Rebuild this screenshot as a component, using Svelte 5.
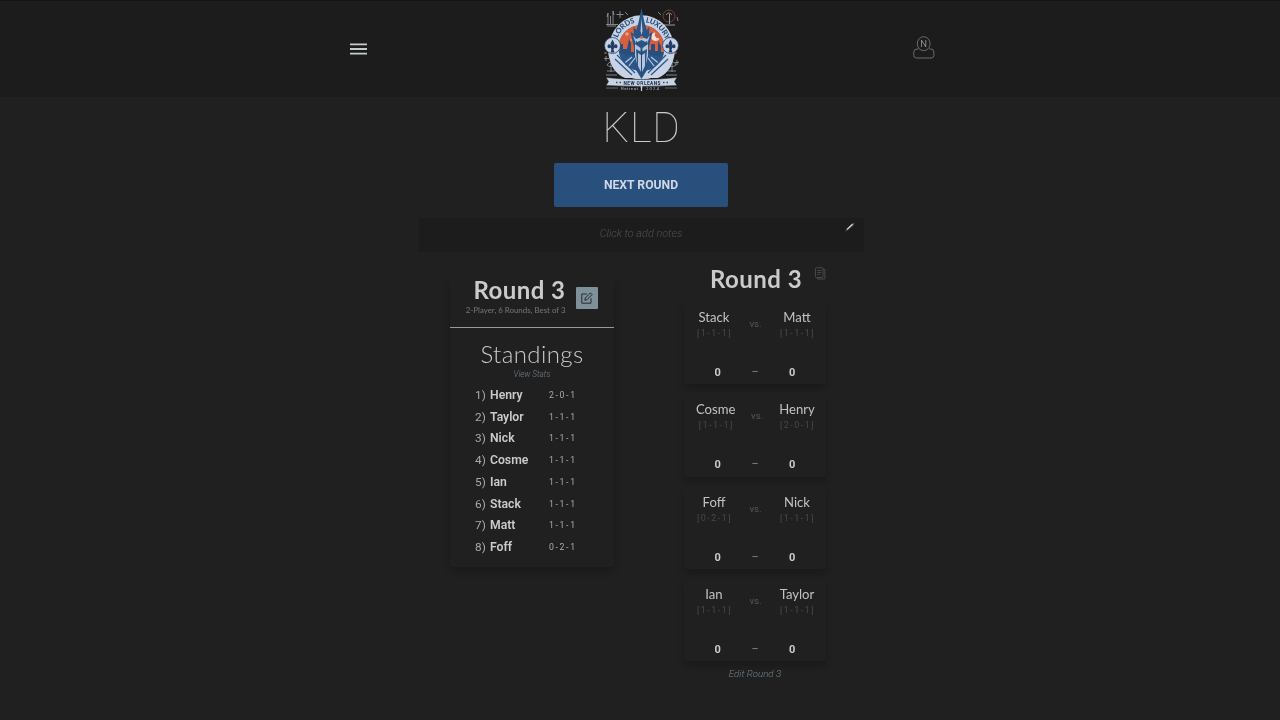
<script>
  const standings = [
    ['Henry', '2-0-1'], ['Taylor', '1-1-1'], ['Nick', '1-1-1'], ['Cosme', '1-1-1'],
    ['Ian', '1-1-1'], ['Stack', '1-1-1'], ['Matt', '1-1-1'], ['Foff', '0-2-1']
  ];
  const matches = [
    { a: 'Stack', ar: '[1-1-1]', b: 'Matt', br: '[1-1-1]' },
    { a: 'Cosme', ar: '[1-1-1]', b: 'Henry', br: '[2-0-1]' },
    { a: 'Foff', ar: '[0-2-1]', b: 'Nick', br: '[1-1-1]' },
    { a: 'Ian', ar: '[1-1-1]', b: 'Taylor', br: '[1-1-1]' }
  ];
</script>

<div class="page">
  <header>
    <svg class="menu" width="17" height="12" viewBox="0 0 17 12" fill="#c6ccca"><path d="M0 .4h17v1.9H0zM0 5h17v2H0zM0 9.7h17v1.9H0z" /></svg>
    <svg class="logo" width="78" height="86" viewBox="0 0 78 86">
      <defs>
        <path id="arcL" d="M14.600 30A25 25 0 0 1 36 14.100" />
        <path id="arcR" d="M42.500 14.300A25 25 0 0 1 63.500 38" />
        <clipPath id="disc"><circle cx="38.500" cy="40" r="23" /></clipPath>
      </defs>
      <g fill="none" stroke="#98a1aa" stroke-width=".8">
        <path d="M5 5v12M7.500 8v8M10 3v13M3 16.500h12M17 3v7M13.500 6.500h7M5 5l-1 4M10 3l1 4M4 18h9" />
        <path d="M3 48v5M1 50.500h5M4 63h8M8 54v10M4 57c2-4 7-4 8 0-2 2-6 2-8 0M3 67h11" />
        <path d="M74 52v5M72 54.500h4M65 63h8M69 54v10M65 57c2-4 7-4 8 0-2 2-6 2-8 0M63 67h11" />
        <circle cx="66" cy="8" r="6" stroke="#8d4638" />
        <path d="M63 7c2-3 5-2 6 0" stroke="#c3a49c" />
        <path d="M66.500 6v10M61 17h11" stroke="#b9bec4" />
        <path d="M74 9l1 4M22 4l3 3M55 4l3 3" />
      </g>
      <path d="M1.500 44h2v2h-2zM71.500 44h2v2h-2z" fill="#a9513d" />
      <circle cx="38.500" cy="39.500" r="32.200" fill="#c6d3e5" />
      <circle cx="38.500" cy="40" r="23" fill="#264f7e" />
      <g clip-path="url(#disc)">
        <path fill="#d85f3e" d="M13 15h51v27l-3-2v4h-3v-6l-3-5v10h-3v-7h-4v6h-3V25H31v19h-3v-9l-2-4-2 10h-4v-5h-3v7h-4z" />
        <path fill="#2b568a" d="M13 45h6l5 3 7-2 3-18h9l3 18 8 2 10-3v26H13z" />
        <path d="M18 58l11-9M22 63l10-13M59 58 48 49M55 63 45 50" stroke="#b8c8de" stroke-width="1.200" fill="none" />
        <path d="M56.500 30a4.200 4.200 0 1 1-4-5.500 3.600 3.600 0 0 0 4 5.500" fill="#f2ddda" />
        <path d="M24 24v4M22 26h4M28 31v2M56 21.500v3M54.500 23h3" stroke="#efc5bd" stroke-width=".8" />
      </g>
      <path fill="#c8d4e5" d="M5 44c6 3 11 9 18 14l11 12H22C12 66 7 57 5 44M72 44c-6 3-11 9-18 14L43 70h12c10-4 15-13 17-26" />
      <g fill="#c8d4e5" stroke="#1f3f69" stroke-width=".8">
        <circle cx="9.500" cy="37.500" r="8" /><circle cx="67.500" cy="37.500" r="8" />
      </g>
      <path d="m12 51 17 16M14 47l18 18M65 51 48 67M63 47 45 65" fill="none" stroke="#2c5484" stroke-width="1.200" />
      <g fill="#223d65">
        <path d="m9.500 31.500 2 4-1 3c1-3 4-3 4 0 0 2-2 2-3 1l-1 2 1 3h-4l1-3-1-2c-1 1-3 1-3-1 0-3 3-3 4 0l-1-3z" />
        <path d="m67.500 31.500 2 4-1 3c1-3 4-3 4 0 0 2-2 2-3 1l-1 2 1 3h-4l1-3-1-2c-1 1-3 1-3-1 0-3 3-3 4 0l-1-3z" />
      </g>
      <path fill="#2a5485" d="m38.500 0 2.700 13 2.300 9 3-3-.5 7 3.500-2-3.500 15-2 23-5.500 9-5.500-9-2-23-3.500-15 3.500 2-.5-7 3 3 2.300-9z" />
      <path fill="#b5c4d8" d="m38.500 10 1 13-1 4-1-4zM30 27l3 4 5.500-2 5.500 2 3-4-2.500 8-6-3-6 3zM32 36l5.500 4v3.500L33 41l1 15-2-8zM45 36l-5.500 4v3.500L44 41l-1 15 2-8zM35 45l3 2v17l-3-6zM42 45l-3 2v17l3-6z" />
      <path d="M37.300 28h2.600v2.600h-2.600z" fill="#d66347" />
      <path d="M38.500 42v26M33 33l2 4M44 33l-2 4" stroke="#214976" />
      <g font-family="Lato, sans-serif" font-weight="900" fill="#294b78" font-size="7.400">
        <text textLength="24"><textPath href="#arcL">LORDS</textPath></text>
        <text textLength="28"><textPath href="#arcR">LUXURY</textPath></text>
      </g>
      <path fill="#c8d3e2" stroke="#1c1c1c" stroke-width=".5" d="M3 69.500q35 4 71 0L71.500 73.500l2.500 4q-36 2-71 0l2.500-4z" />
      <path d="M13 74.500h1.500M16.500 74.500H18M60 74.500h1.500M63.500 74.500H65" stroke="#294b78" stroke-width="1.500" />
      <text x="20.500" y="76.500" textLength="37" font-family="Roboto, sans-serif" font-size="4.800" font-weight="900" fill="#263f62">NEW ORLEANS</text>
      <path d="M3 80h12M62 80h12" stroke="#7e8893" stroke-width=".7" />
      <text x="18" y="82.200" textLength="17" font-family="Roboto, sans-serif" font-size="4.400" fill="#aeb5bd">Retreat</text>
      <text x="43" y="82.200" textLength="13" font-family="Roboto, sans-serif" font-size="4.400" fill="#aeb5bd">2024</text>
      <path d="M38.500 76v7M37.500 79h2" stroke="#c8d3e2" stroke-width="1.200" />
    </svg>
    <svg class="user" width="22" height="24" viewBox="0 0 22 24" fill="none" stroke="#6c6c6c" stroke-width="1">
      <ellipse cx="10.700" cy="7.700" rx="6.400" ry="7" />
      <path d="M5.500 13H4Q1 13 .8 16v3.500Q1 22 3.500 22h14.700q2.500 0 2.700-2.500V16q-.2-3-3-3h-1.700" />
      <text x="10.700" y="10.800" font-family="Roboto, sans-serif" font-size="9.500" fill="#8c8c8c" stroke="none" text-anchor="middle">N</text>
    </svg>
  </header>

  <main>
    <h1>KLD</h1>
    <button class="next">NEXT ROUND</button>
    <div class="notes">
      <span>Click to add notes</span>
      <svg width="12" height="12" viewBox="0 0 12 12"><path d="m1 9.800 2-3.400L8.500 1.300 10.500 1 9.800 3 4 8z" fill="#56595e" /><path d="m3 7.400 5.500-5.200" stroke="#d4d8de" stroke-width="1.200" /></svg>
    </div>

    <div class="columns">
      <section class="card standings">
        <div class="top">
          <div class="title">
            <h2>Round 3</h2>
            <p>2-Player, 6 Rounds, Best of 3</p>
          </div>
          <button class="edit" aria-label="Edit">
            <svg width="12" height="12" viewBox="0 0 12 12" fill="none" stroke="#252c30" stroke-width="1"><path d="M6 2H.8v9.200H10V6.300M3.800 8.200l.5-2.200L9.400.9l1.700 1.700L6 7.700z" /></svg>
          </button>
        </div>
        <h3>Standings</h3>
        <span class="stats">View Stats</span>
        <div class="list">
          {#each standings as [name, record], i}
            <div class="row"><span class="rank">{i + 1})</span><b>{name}</b><span class="rec">{record}</span></div>
          {/each}
        </div>
      </section>

      <section class="round">
        <div class="heading">
          <h2>Round 3</h2>
          <svg width="11" height="13" viewBox="0 0 11 13" fill="none" stroke="#484848"><rect x=".5" y=".7" width="7.500" height="9.800" rx="1" /><path d="M8 2.300h1.800v9.700H2.500v-1.500M2.300 3.500h4M2.300 5.500h4M2.300 7.500h2.500" /></svg>
        </div>
        {#each matches as m}
          <div class="card match">
            <div class="players">
              <div class="player"><span class="name">{m.a}</span><span class="mrec">{m.ar}</span></div>
              <span class="vs">vs.</span>
              <div class="player"><span class="name">{m.b}</span><span class="mrec">{m.br}</span></div>
            </div>
            <div class="score"><b>0</b><span>–</span><b>0</b></div>
          </div>
        {/each}
        <span class="editround">Edit Round 3</span>
      </section>
    </div>
  </main>
</div>

<style>
  :global(body) { background: #202020; }
  .page { width: 1280px; height: 720px; overflow: hidden; box-sizing: border-box; background: #202020; color: #cbcbcb; font-family: Roboto, sans-serif; }
  header { height: 97px; box-sizing: border-box; padding: 0 345px 0 350px; background: #1c1c1c; border-top: 1px solid #141414; display: grid; grid-template-columns: 253px 78px 1fr; align-items: start; }
  .menu { margin-top: 42px; }
  .logo { margin-top: 7px; will-change: transform; }
  .user { margin-top: 35px; justify-self: end; will-change: transform; }
  main { display: flex; flex-direction: column; align-items: center; padding-left: 2px; will-change: transform; }
  h1, h2, h3, p { margin: 0; font-weight: 400; }
  h1 { font-size: 42px; font-weight: 100; line-height: 48px; margin-top: 7px; letter-spacing: .7px; margin-right: -1px; }
  .next { margin-top: 11px; width: 174px; height: 43.500px; border: 0; border-radius: 2px; background: #29507c; color: #cfd9e6; font: 700 12.200px Roboto, sans-serif; padding: 0; }
  .notes { position: relative; margin-top: 11.500px; width: 445px; height: 34px; background: #1c1c1c; display: flex; justify-content: center; font-size: 10.900px; font-style: italic; font-weight: 300; line-height: 31px; color: #505050; }
  .notes svg { position: absolute; right: 8px; top: 4px; }
  .columns { display: flex; align-items: flex-start; width: 376px; justify-content: space-between; margin-right: 6px; }
  .card { background: #202020; border-radius: 4px; box-shadow: 0 5px 7px #00000034; }
  .standings { width: 164px; height: 293px; margin-top: 22px; display: flex; flex-direction: column; align-items: center; }
  .top { width: 100%; height: 54px; box-sizing: border-box; border-bottom: 1px solid #999; display: flex; padding-left: 16px; }
  .title { width: 99.500px; display: flex; flex-direction: column; align-items: flex-end; }
  h2 { font: 700 24px/28px Lato, sans-serif; letter-spacing: .45px; white-space: nowrap; }
  .title h2 { margin-top: 2px; }
  .title p { font: 7.900px/10px Lato, sans-serif; color: #777; white-space: nowrap; margin-top: 1px; }
  .edit { width: 22px; height: 22px; margin: 12.500px 0 0 10.500px; border: 0; border-radius: 1px; padding: 0; background: #7e919b; display: flex; align-items: center; justify-content: center; }
  h3 { font: 300 24px/30px Lato, sans-serif; margin-top: 11px; letter-spacing: .4px; }
  .stats { font-size: 8.200px; line-height: 10px; font-style: italic; font-weight: 300; color: #71808a; margin-top: 0; }
  .list { width: 114px; margin-top: 5px; }
  .row { height: 21.750px; display: flex; align-items: center; font-size: 12.200px; }
  .rank { width: 15px; font-size: 11.800px; font-weight: 400; white-space: nowrap; color: #aaa; }
  .row b { width: 59px; font-weight: 600; }
  .rec { font-size: 8.700px; letter-spacing: 1.650px; color: #aaa; white-space: nowrap; }
  .round { width: 142px; margin-top: 13px; display: flex; flex-direction: column; }
  .heading { width: 142px; display: flex; justify-content: space-between; padding-left: 26px; box-sizing: border-box; height: 37px; }
  .heading svg { margin-top: 2px; }
  .match { height: 82.300px; margin-bottom: 10.100px; }
  .players { display: flex; justify-content: space-between; padding: 6px 11px 0 12px; }
  .player { display: flex; flex-direction: column; align-items: center; min-width: 36px; }
  .name { font: 400 13.100px/18px Lato, sans-serif; color: #c2c2c2; }
  .mrec { font-size: 9px; line-height: 12px; margin-top: 1px; color: #484848; letter-spacing: 1.450px; margin-right: -1px; white-space: nowrap; }
  .vs { font-size: 9.700px; margin-top: 10px; color: #575757; }
  .score { display: grid; grid-template-columns: 1fr 7px 1fr; text-align: center; margin-top: 27px; font-size: 11px; line-height: 14px; }
  .score span { color: #888; position: relative; top: -1px; }
  .editround { align-self: center; font-size: 9.700px; line-height: 12px; font-style: italic; font-weight: 300; color: #71808a; margin-top: -4px; }
</style>
